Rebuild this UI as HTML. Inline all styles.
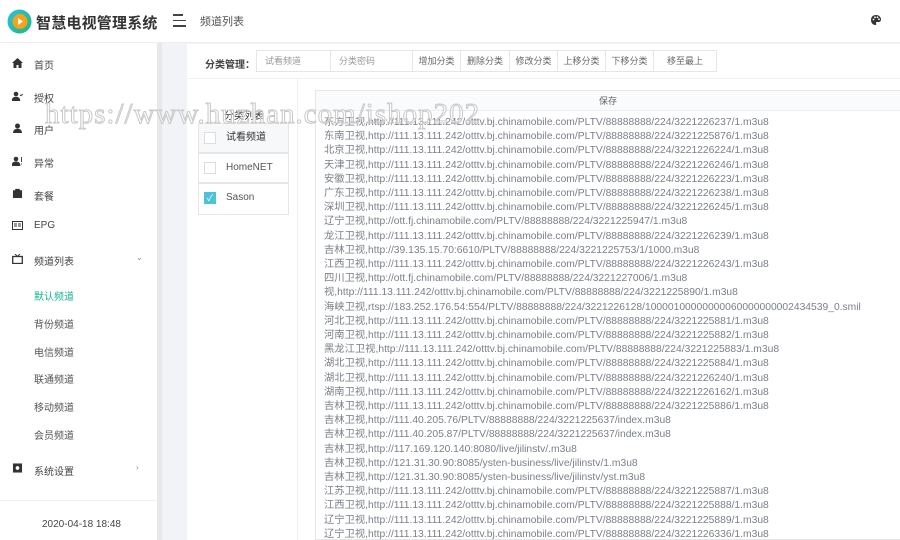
<!DOCTYPE html>
<html><head><meta charset="utf-8"><style>
*{margin:0;padding:0;box-sizing:border-box}
body{width:900px;height:540px;overflow:hidden;background:#f2f3f7;font-family:"Liberation Sans","Noto Sans CJK SC",sans-serif;position:relative;color:#333}
.abs{position:absolute}
#side{left:0;top:0;width:157px;height:540px;background:#fff}
#sb{left:157px;top:43px;width:5px;height:497px;background:#e8e8e8}
#hdr{left:0;top:0;width:900px;height:43px;background:#fff;border-bottom:1px solid #eee}
.nav{position:absolute;left:34px;font-size:10px;color:#444}
.ico{position:absolute;left:12px;width:11px;height:10px}
.sub{position:absolute;left:34px;font-size:10px;color:#555}
#card{left:187px;top:44px;width:713px;height:496px;background:#fff}
.btn{position:absolute;top:50px;height:22px;border:1px solid #e6e6e6;font-size:9px;color:#666;line-height:20px;text-align:center}
.cat{position:absolute;left:198px;width:91px;height:30px;border:1px solid #e6e6e6;font-size:10px;color:#555;line-height:28px;padding-left:27px}
.cb{position:absolute;left:5px;top:8px;width:12px;height:12px;border:1px solid #ddd;background:#fff}
#ta{left:315px;top:90px;width:585px;height:450px;border:1px solid #e6e6e6;border-right:none}
#lines{left:324px;top:117px;width:576px;height:423px;overflow:hidden;font-size:10.3px;color:#7a7f88;line-height:14.2px;white-space:nowrap}
</style></head><body>
<div id="side" class="abs"></div>
<div id="sb" class="abs"></div>
<div id="hdr" class="abs"></div>
<svg class="abs" style="left:7px;top:9px" width="25" height="25" viewBox="0 0 25 25"><defs><linearGradient id="g" x1="0" y1="0" x2="1" y2="1"><stop offset="0" stop-color="#2bc3e0"/><stop offset="1" stop-color="#1fb87a"/></linearGradient></defs><circle cx="12.5" cy="12.5" r="12" fill="url(#g)"/><circle cx="13" cy="12.5" r="7.5" fill="#f7a21b"/><path d="M11 9 L16 12.5 L11 16Z" fill="#fff"/></svg>
<div class="abs" style="left:36px;top:12px;font-size:15px;font-weight:bold;color:#333;letter-spacing:0.2px">智慧电视管理系统</div>
<div class="abs" style="left:173px;top:14px;width:13px"><div style="height:1.5px;background:#444;margin-bottom:4px;width:10px"></div><div style="height:1.5px;background:#444;margin-bottom:4px;width:13px"></div><div style="height:1.5px;background:#444;width:13px"></div></div>
<div class="abs" style="left:200px;top:13px;font-size:11px;color:#555">频道列表</div>
<svg class="abs" style="left:870px;top:14px" width="12" height="12" viewBox="0 0 12 12"><path d="M6 1C3 1 1 3 1 6c0 3 2 5 4.5 5 1 0 1-1 .6-1.6-.4-.7 0-1.4.8-1.4H8.5C10 8 11 7 11 5.5 11 3 9 1 6 1z" fill="#333"/><circle cx="3.5" cy="5.5" r=".9" fill="#fff"/><circle cx="5" cy="3.3" r=".9" fill="#fff"/><circle cx="7.5" cy="3.3" r=".9" fill="#fff"/><circle cx="9" cy="5.3" r=".9" fill="#fff"/></svg>

<svg class="ico" style="top:58px" viewBox="0 0 11 10"><path d="M5.5 0L0 5h1.5v5h3V7h2v3h3V5H11z" fill="#333"/></svg><div class="nav" style="top:57px">首页</div>
<svg class="ico" style="top:91px" viewBox="0 0 11 10"><circle cx="4" cy="3" r="2.3" fill="#333"/><path d="M0 10c0-3 2-4 4-4s4 1 4 4z M8 4l1 1 2-2" fill="#333" stroke="#333" stroke-width=".6"/></svg><div class="nav" style="top:90px">授权</div>
<svg class="ico" style="top:123px" viewBox="0 0 11 10"><circle cx="5.5" cy="3" r="2.5" fill="#333"/><path d="M1 10c0-3 2-4.3 4.5-4.3S10 7 10 10z" fill="#333"/></svg><div class="nav" style="top:122px">用户</div>
<svg class="ico" style="top:156px" viewBox="0 0 11 10"><circle cx="4" cy="3" r="2.3" fill="#333"/><path d="M0 10c0-3 2-4 4-4s4 1 4 4z M9.5 1v5 M9.5 7.5v1" fill="#333" stroke="#333" stroke-width=".9"/></svg><div class="nav" style="top:155px">异常</div>
<svg class="ico" style="top:188px" viewBox="0 0 11 11"><path d="M1 3h9v8H1z M3.5 3V1.5h4V3" fill="#333" stroke="#333"/></svg><div class="nav" style="top:188px">套餐</div>
<svg class="ico" style="top:221px" viewBox="0 0 11 10"><rect x=".5" y=".5" width="10" height="8" fill="none" stroke="#333"/><path d="M2 3h3M2 5h3M6 3h3M6 5h3" stroke="#333"/></svg><div class="nav" style="top:220px">EPG</div>
<svg class="ico" style="top:254px" viewBox="0 0 11 10"><rect x=".7" y="2.5" width="9.6" height="7" fill="none" stroke="#333" stroke-width="1.3"/><path d="M3 0l2.5 2.5L8 0" stroke="#333" fill="none"/></svg><div class="nav" style="top:253px">频道列表</div>
<div class="abs" style="left:136px;top:253px;font-size:8px;color:#888">⌄</div>
<div class="sub" style="top:288px;color:#19b394">默认频道</div>
<div class="sub" style="top:316px">背份频道</div>
<div class="sub" style="top:344px">电信频道</div>
<div class="sub" style="top:371px">联通频道</div>
<div class="sub" style="top:399px">移动频道</div>
<div class="sub" style="top:427px">会员频道</div>
<svg class="ico" style="top:463px" viewBox="0 0 11 11"><rect x=".5" y=".5" width="10" height="10" fill="#333"/><circle cx="5.5" cy="5.5" r="2" fill="#fff"/></svg><div class="nav" style="top:463px">系统设置</div>
<div class="abs" style="left:136px;top:463px;font-size:8px;color:#888">›</div>
<div class="abs" style="left:0;top:500px;width:157px;height:1px;background:#f0f0f0"></div>
<div class="abs" style="left:42px;top:519px;font-size:10px;color:#444">2020-04-18 18:48</div>

<div id="card" class="abs"></div>
<div class="abs" style="left:205px;top:56px;font-size:10px;font-weight:bold;color:#444">分类管理：</div>
<div class="btn" style="left:256px;width:75px;text-align:left;padding-left:8px;color:#999">试看频道</div>
<div class="btn" style="left:330px;width:83px;text-align:left;padding-left:8px;color:#999">分类密码</div>
<div class="btn" style="left:412px;width:49px">增加分类</div>
<div class="btn" style="left:460px;width:50px">删除分类</div>
<div class="btn" style="left:509px;width:49px">修改分类</div>
<div class="btn" style="left:557px;width:49px">上移分类</div>
<div class="btn" style="left:605px;width:49px">下移分类</div>
<div class="btn" style="left:653px;width:64px">移至最上</div>
<div class="abs" style="left:187px;top:78px;width:713px;height:1px;background:#f0f0f0"></div>
<div class="abs" style="left:297px;top:78px;width:1px;height:462px;background:#f0f0f0"></div>
<div class="abs" style="left:224px;top:107px;font-size:10px;color:#333">分类列表</div>
<div class="cat" style="top:123px;background:#f7f8fa;color:#333"><div class="cb"></div>试看频道</div>
<div class="cat" style="top:153px"><div class="cb"></div>HomeNET</div>
<div class="cat" style="top:183px;height:32px"><div class="cb" style="background:#4cc3d9;border-color:#4cc3d9;color:#fff;font-size:9px;line-height:10px;text-align:center">✓</div>Sason</div>
<div id="ta" class="abs"></div>
<div class="abs" style="left:316px;top:91px;width:584px;height:20px;background:#fafbfc;border-bottom:1px solid #eee;font-size:9px;color:#666;text-align:center;line-height:20px">保存</div>
<div id="lines" class="abs"><div style="margin-top:-1px">
东方卫视,http://111.13.111.242/otttv.bj.chinamobile.com/PLTV/88888888/224/3221226237/1.m3u8<br>
东南卫视,http://111.13.111.242/otttv.bj.chinamobile.com/PLTV/88888888/224/3221225876/1.m3u8<br>
北京卫视,http://111.13.111.242/otttv.bj.chinamobile.com/PLTV/88888888/224/3221226224/1.m3u8<br>
天津卫视,http://111.13.111.242/otttv.bj.chinamobile.com/PLTV/88888888/224/3221226246/1.m3u8<br>
安徽卫视,http://111.13.111.242/otttv.bj.chinamobile.com/PLTV/88888888/224/3221226223/1.m3u8<br>
广东卫视,http://111.13.111.242/otttv.bj.chinamobile.com/PLTV/88888888/224/3221226238/1.m3u8<br>
深圳卫视,http://111.13.111.242/otttv.bj.chinamobile.com/PLTV/88888888/224/3221226245/1.m3u8<br>
辽宁卫视,http://ott.fj.chinamobile.com/PLTV/88888888/224/3221225947/1.m3u8<br>
龙江卫视,http://111.13.111.242/otttv.bj.chinamobile.com/PLTV/88888888/224/3221226239/1.m3u8<br>
吉林卫视,http://39.135.15.70:6610/PLTV/88888888/224/3221225753/1/1000.m3u8<br>
江西卫视,http://111.13.111.242/otttv.bj.chinamobile.com/PLTV/88888888/224/3221226243/1.m3u8<br>
四川卫视,http://ott.fj.chinamobile.com/PLTV/88888888/224/3221227006/1.m3u8<br>
视,http://111.13.111.242/otttv.bj.chinamobile.com/PLTV/88888888/224/3221225890/1.m3u8<br>
海峡卫视,rtsp://183.252.176.54:554/PLTV/88888888/224/3221226128/10000100000000060000000002434539_0.smil<br>
河北卫视,http://111.13.111.242/otttv.bj.chinamobile.com/PLTV/88888888/224/3221225881/1.m3u8<br>
河南卫视,http://111.13.111.242/otttv.bj.chinamobile.com/PLTV/88888888/224/3221225882/1.m3u8<br>
黑龙江卫视,http://111.13.111.242/otttv.bj.chinamobile.com/PLTV/88888888/224/3221225883/1.m3u8<br>
湖北卫视,http://111.13.111.242/otttv.bj.chinamobile.com/PLTV/88888888/224/3221225884/1.m3u8<br>
湖北卫视,http://111.13.111.242/otttv.bj.chinamobile.com/PLTV/88888888/224/3221226240/1.m3u8<br>
湖南卫视,http://111.13.111.242/otttv.bj.chinamobile.com/PLTV/88888888/224/3221226162/1.m3u8<br>
吉林卫视,http://111.13.111.242/otttv.bj.chinamobile.com/PLTV/88888888/224/3221225886/1.m3u8<br>
吉林卫视,http://111.40.205.76/PLTV/88888888/224/3221225637/index.m3u8<br>
吉林卫视,http://111.40.205.87/PLTV/88888888/224/3221225637/index.m3u8<br>
吉林卫视,http://117.169.120.140:8080/live/jilinstv/.m3u8<br>
吉林卫视,http://121.31.30.90:8085/ysten-business/live/jilinstv/1.m3u8<br>
吉林卫视,http://121.31.30.90:8085/ysten-business/live/jilinstv/yst.m3u8<br>
江苏卫视,http://111.13.111.242/otttv.bj.chinamobile.com/PLTV/88888888/224/3221225887/1.m3u8<br>
江西卫视,http://111.13.111.242/otttv.bj.chinamobile.com/PLTV/88888888/224/3221225888/1.m3u8<br>
辽宁卫视,http://111.13.111.242/otttv.bj.chinamobile.com/PLTV/88888888/224/3221225889/1.m3u8<br>
辽宁卫视,http://111.13.111.242/otttv.bj.chinamobile.com/PLTV/88888888/224/3221226336/1.m3u8
</div></div>
<div class="abs" style="left:45px;top:98px;font-family:'Liberation Serif',serif;font-size:29px;color:rgba(255,255,255,0.3);-webkit-text-stroke:1px #c8c8c8;white-space:nowrap;letter-spacing:1px">https://www.huzhan.com/ishop202</div>
</body></html>
